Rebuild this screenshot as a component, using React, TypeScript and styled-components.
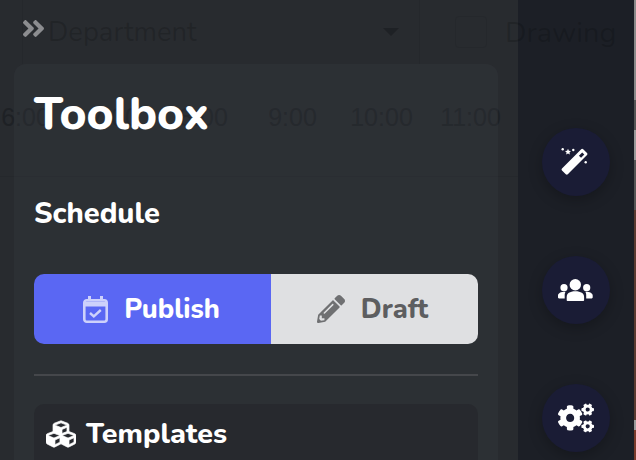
import styled, { createGlobalStyle } from 'styled-components'
import { FaAngleDoubleRight, FaCogs, FaPencilAlt, FaCubes } from 'react-icons/fa'

const GlobalStyle = createGlobalStyle`
  html, body {
    margin: 0;
    height: 100%;
    overflow: hidden;
    background: #282b2f;
  }
  body {
    font-family: "Nunito", "Lato", "Noto Sans", sans-serif;
  }
`

const Page = styled.div`
  position: relative;
  width: 636px;
  height: 460px;
  overflow: hidden;
  background: #282b2f;
`

const Header = styled.div`
  display: flex;
  align-items: center;
  height: 64px;
  padding-left: 22px;
  color: rgba(0, 0, 0, 0.16);
`

const SelectBox = styled.div`
  display: flex;
  align-items: center;
  justify-content: space-between;
  width: 398px;
  height: 64px;
  padding: 0 20px 0 25px;
  font-size: 27.4px;
  box-sizing: border-box;
  border-left: 1px solid #25282c;
  border-right: 1px solid #25282c;
`

const Caret = styled.div`
  width: 0;
  height: 0;
  border-left: 8px solid transparent;
  border-right: 8px solid transparent;
  border-top: 8px solid #1e2125;
`

const CheckBox = styled.div`
  width: 30px;
  height: 30px;
  margin-left: 35px;
  border: 1px solid #25282c;
  border-radius: 4px;
`

const HeaderLabel = styled.div`
  position: relative;
  z-index: 1;
  margin-left: 18px;
  font-size: 29px;
  white-space: nowrap;
`

const Timeline = styled.div`
  display: grid;
  grid-template-columns: repeat(6, 89px);
  justify-items: center;
  align-items: center;
  height: 113px;
  box-sizing: border-box;
  padding-bottom: 6px;
  margin-left: -19px;
  border-bottom: 1px solid #25282c;
  font-family: "Liberation Sans", sans-serif;
  font-size: 25px;
  color: #1e2125;
`

const Toolbox = styled.div`
  position: absolute;
  top: 64px;
  left: 14px;
  width: 484px;
  height: 396px;
  box-sizing: border-box;
  padding: 20px;
  border-radius: 12px 12px 0 0;
  background: rgba(57, 60, 67, 0.3);
  color: #fff;
`

const Title = styled.h1`
  margin: 0;
  font-size: 46px;
  line-height: 60px;
  font-weight: 800;
`

const Subtitle = styled.h2`
  margin: 50px 0 0;
  font-size: 29px;
  line-height: 40px;
  font-weight: 800;
`

const Toggle = styled.div`
  display: grid;
  grid-template-columns: 237px 207px;
  height: 70px;
  margin-top: 40px;
  border-radius: 10px;
  overflow: hidden;
`

const ToggleOption = styled.div<{ $active?: boolean }>`
  display: flex;
  align-items: center;
  justify-content: center;
  gap: 16px;
  padding-right: ${p => (p.$active ? '2px' : '4px')};
  font-size: 27px;
  font-weight: 800;
  background: ${p => (p.$active ? '#5a67f3' : '#dfe0e2')};
  color: ${p => (p.$active ? '#fff' : '#5d5e60')};
  svg {
    color: ${p => (p.$active ? '#cdd1fb' : '#6f7072')};
  }
`

const Divider = styled.div`
  height: 2px;
  margin-top: 30px;
  background: #45474b;
`

const Card = styled.div`
  margin-top: 28px;
  padding: 10px 12px;
  height: 60px;
  border-radius: 10px 10px 0 0;
  background: #27292e;
`

const CardTitle = styled.div`
  display: flex;
  align-items: center;
  gap: 10px;
  font-size: 28.600px;
  line-height: 40px;
  font-weight: 800;
  svg {
    stroke: currentColor;
    stroke-width: 12px;
  }
`

const Drawer = styled.div`
  position: absolute;
  top: 0;
  left: 518px;
  width: 116px;
  height: 460px;
  display: flex;
  flex-direction: column;
  align-items: center;
  gap: 60px;
  padding-top: 128px;
  box-sizing: border-box;
  background: #1c1f26;
`

const Edge = styled.div`
  position: absolute;
  top: 0;
  right: 0;
  width: 2px;
  height: 460px;
  background: linear-gradient(#8a8a8a 0 100px, #555 100px 130px, #9a9a9a 130px 160px, #555 160px 210px, #5a3a30 210px 420px, #999 420px 430px, #7a3a2a 430px);
`

const Fab = styled.div`
  flex: none;
  display: flex;
  align-items: center;
  justify-content: center;
  width: 68px;
  height: 68px;
  border-radius: 50%;
  background: #1a1c35;
  color: #fff;
  box-shadow: 0 4px 14px rgba(0, 0, 0, 0.25);
`

const Expand = styled.div`
  position: absolute;
  top: 15px;
  left: 20px;
  color: #8c8d90;
  display: flex;
`

const CalendarIcon = () => (
  <svg width="25" height="27" viewBox="0 0 25 27" fill="none" stroke="currentColor" strokeWidth="2.6">
    <rect x="1.3" y="4.3" width="22.4" height="21.4" rx="2.5" />
    <path d="M1.3 8h22.4" strokeWidth="5" />
    <path d="M6.5 0v5M18.5 0v5" strokeWidth="3" />
    <path d="M7 17l3.8 3.4 7-6.4" strokeWidth="2.4" />
  </svg>
)

const WandIcon = () => (
  <svg width="32" height="32" viewBox="0 0 32 32" fill="#fff">
    <rect x="-0.5" y="11.6" width="30" height="8.2" rx="1.4" transform="rotate(-45 14.5 15.7)" />
    <rect x="20.2" y="6.8" width="3" height="4.6" fill="#1a1c35" transform="rotate(45 21.7 9)" />
    <path d="M8 2.8l.9 2 2.1.2-1.6 1.4.5 2.1L8 7.4 6.1 8.500l.5-2.100L5 5l2.100-.2z" />
    <circle cx="2.700" cy="3.300" r="1.200" />
    <circle cx="13.300" cy="4" r="1.200" />
    <circle cx="25.700" cy="16.300" r="1.200" />
  </svg>
)

const GroupIcon = () => (
  <svg width="36" height="24" viewBox="0 0 36 24" fill="#fff">
    <circle cx="17.300" cy="6.700" r="5.700" />
    <path d="M8.700 20v-1c0-3.500 3-5.700 8.600-5.700s8.800 2.200 8.800 5.700v3c0 .6-.4 1-1 1H9.700c-.6 0-1-.4-1-1z" />
    <circle cx="6" cy="9.700" r="3.600" />
    <circle cx="28.700" cy="9.700" r="3.600" />
    <path d="M0 19.300v-1.800c0-2.200 2.500-3.800 7.600-3.800-.9 1.300-.9 2.600-.9 4.300v2.400H1c-.6 0-1-.5-1-1.100z" />
    <path d="M34.700 19.300v-1.800c0-2.200-2.500-3.800-7.400-3.800.9 1.300.9 2.600.9 4.300v2.400H33.700c.6 0 1-.5 1-1.100z" />
  </svg>
)

const hours = ['6:00', '7:00', '8:00', '9:00', '10:00', '11:00']

export default function App() {
  return (
    <Page>
      <GlobalStyle />
      <Header>
        <SelectBox>
          Department
          <Caret />
        </SelectBox>
        <CheckBox />
        <HeaderLabel>Drawing</HeaderLabel>
      </Header>
      <Timeline>
        {hours.map(h => <div key={h}>{h}</div>)}
      </Timeline>
      <Toolbox>
        <Title>Toolbox</Title>
        <Subtitle>Schedule</Subtitle>
        <Toggle>
          <ToggleOption $active>
            <CalendarIcon />
            Publish
          </ToggleOption>
          <ToggleOption>
            <FaPencilAlt size={28} />
            Draft
          </ToggleOption>
        </Toggle>
        <Divider />
        <Card>
          <CardTitle>
            <FaCubes size={30} />
            Templates
          </CardTitle>
        </Card>
      </Toolbox>
      <Drawer>
        <Fab><WandIcon /></Fab>
        <Fab><GroupIcon /></Fab>
        <Fab><FaCogs size={36} /></Fab>
      </Drawer>
      <Edge />
      <Expand><FaAngleDoubleRight size={27} /></Expand>
    </Page>
  )
}
